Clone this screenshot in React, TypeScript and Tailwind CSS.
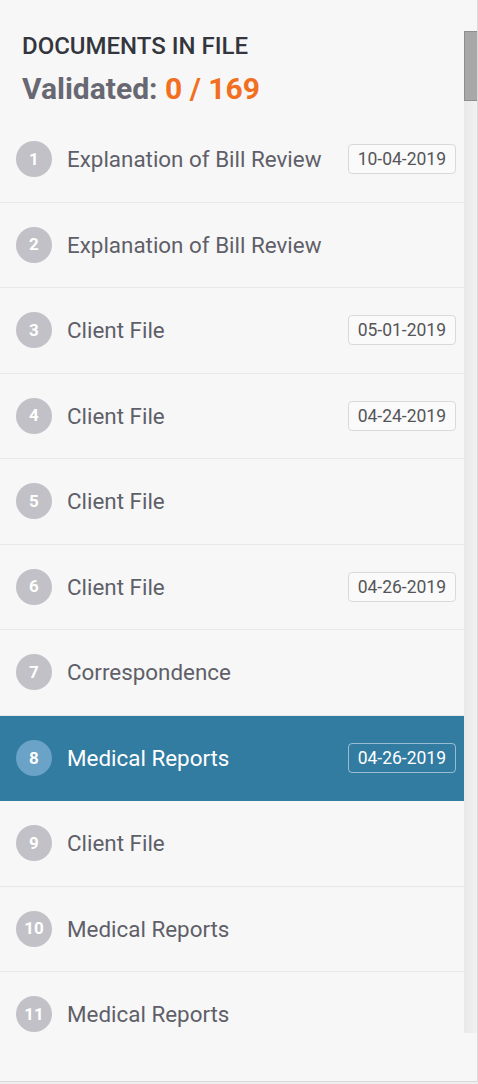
import React from "react";

type Doc = {
  n: number;
  title: string;
  date?: string;
};

const docs: Doc[] = [
  { n: 1, title: "Explanation of Bill Review", date: "10-04-2019" },
  { n: 2, title: "Explanation of Bill Review" },
  { n: 3, title: "Client File", date: "05-01-2019" },
  { n: 4, title: "Client File", date: "04-24-2019" },
  { n: 5, title: "Client File" },
  { n: 6, title: "Client File", date: "04-26-2019" },
  { n: 7, title: "Correspondence" },
  { n: 8, title: "Medical Reports", date: "04-26-2019" },
  { n: 9, title: "Client File" },
  { n: 10, title: "Medical Reports" },
  { n: 11, title: "Medical Reports" },
];

const SELECTED = 8;

function DocRow({ doc }: { doc: Doc }) {
  const active = doc.n === SELECTED;
  return (
    <div
      className={
        active
          ? "h-[85.5px] shrink-0 flex items-center pl-4 pr-2 bg-[#327ba1]"
          : "h-[85.5px] shrink-0 flex items-center pl-4 pr-2 border-b border-[#e8e8e8]"
      }
    >
      <div
        className={
          active
            ? "w-9 h-9 rounded-full bg-[#6aa2c8] text-white flex items-center justify-center text-[17px] font-bold shrink-0"
            : "w-9 h-9 rounded-full bg-[#c1c1c7] text-white flex items-center justify-center text-[17px] font-bold shrink-0"
        }
      >
        {doc.n}
      </div>
      <div
        className={
          active
            ? "ml-[15px] flex-1 text-[22.4px] leading-7 text-white"
            : "ml-[15px] flex-1 text-[22.4px] leading-7 text-[#5f5f69]"
        }
      >
        {doc.title}
      </div>
      {doc.date && (
        <div
          className={
            active
              ? "h-[30px] px-[9px] flex items-center rounded border border-white/50 text-white text-[17.5px]"
              : "h-[30px] px-[9px] flex items-center rounded border border-[#d9d9d9] bg-[#fafafa] text-[#555559] text-[17.5px]"
          }
        >
          {doc.date}
        </div>
      )}
    </div>
  );
}

export default function App() {
  return (
    <div
      className="w-[478px] h-[1084px] bg-[#efefef] overflow-hidden"
      style={{ fontFamily: "Roboto, 'Liberation Sans', sans-serif" }}
    >
      <div className="h-[1082px] bg-[#f7f7f7] border-b border-r border-[#dadada] flex flex-col">
        <div className="h-[31px] shrink-0" />
        <div className="flex h-[1002px] shrink-0">
          <div className="flex-1 overflow-hidden flex flex-col">
            <div className="pl-[22px] pb-[10px] shrink-0">
              <div className="text-[24px] leading-7 font-medium text-[#33363d] pt-px">
                DOCUMENTS IN FILE
              </div>
              <div className="text-[30px] leading-9 font-bold text-[#686872] mt-[11px]">
                Validated: <span className="text-[#f26f21]">0 / 169</span>
              </div>
            </div>
            {docs.map((d) => (
              <DocRow key={d.n} doc={d} />
            ))}
          </div>
          <div className="w-[13px] shrink-0 flex flex-col bg-gradient-to-r from-[#e9e9e9] to-[#f1f1f1]">
            <div className="h-[70px] bg-[#a8a8a8] border-l border-t border-b border-[#8e8e8e]" />
          </div>
        </div>
      </div>
    </div>
  );
}
